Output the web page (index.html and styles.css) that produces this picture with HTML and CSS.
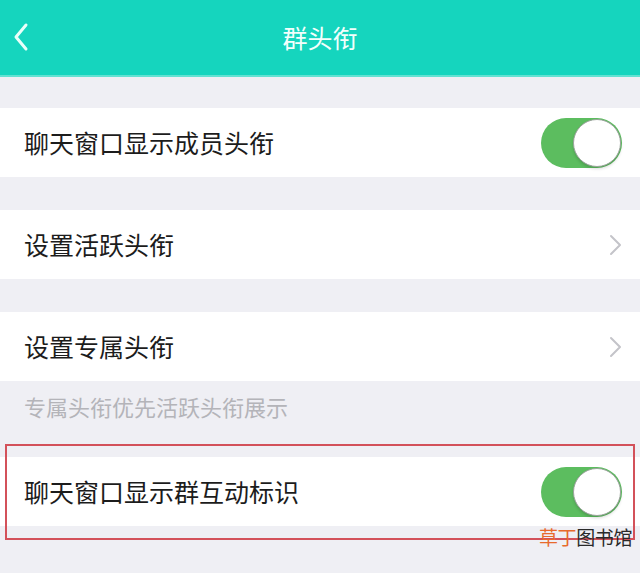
FILE: index.html
```html
<!DOCTYPE html>
<html lang="zh-CN">
<head>
  <meta charset="UTF-8" />
  <title>群头衔</title>
  <link rel="stylesheet" href="styles.css">
</head>
<body>
  <header class="nav-bar">
    <span class="back-btn">
      <svg width="16" height="30" viewBox="0 0 16 30">
        <path d="M13 3 L3 15 L13 27" fill="none" stroke="#eafffa" stroke-width="3" stroke-linecap="round" stroke-linejoin="round"/>
      </svg>
    </span>
    <h1 class="nav-title">群头衔</h1>
  </header>

  <main class="settings">
    <div class="cell first">
      <span class="cell-label">聊天窗口显示成员头衔</span>
      <span class="switch on"><span class="knob"></span></span>
    </div>

    <div class="cell gap">
      <span class="cell-label">设置活跃头衔</span>
      <svg class="arrow" width="13" height="22" viewBox="0 0 13 22">
        <path d="M2 2 L11 11 L2 20" fill="none" stroke="#c4c4c9" stroke-width="2" stroke-linecap="round" stroke-linejoin="round"/>
      </svg>
    </div>

    <div class="cell gap">
      <span class="cell-label">设置专属头衔</span>
      <svg class="arrow" width="13" height="22" viewBox="0 0 13 22">
        <path d="M2 2 L11 11 L2 20" fill="none" stroke="#c4c4c9" stroke-width="2" stroke-linecap="round" stroke-linejoin="round"/>
      </svg>
    </div>
    <p class="note">专属头衔优先活跃头衔展示</p>

    <div class="marked">
      <div class="cell">
        <span class="cell-label">聊天窗口显示群互动标识</span>
        <span class="switch on"><span class="knob"></span></span>
      </div>
      <span class="mark-box"></span>
      <span class="stamp"><em>草丁</em>图书馆</span>
    </div>
  </main>
</body>
</html>
```

FILE: styles.css
```css
* {
  box-sizing: border-box;
}
body {
  margin: 0;
  min-height: 573px;
  background-color: #efeff4;
  font-family: "Noto Sans CJK SC", "Noto Sans", sans-serif;
  color: #1c1c1c;
}
.nav-bar {
  height: 77px;
  background-color: #15d5be;
  border-bottom: 2px solid #62e2d2;
  display: flex;
  align-items: center;
  justify-content: center;
  position: relative;
}
.back-btn {
  position: absolute;
  left: 13px;
  top: 22px;
  display: flex;
}
.nav-title {
  margin: 0;
  font-size: 25px;
  font-weight: normal;
  color: #f2fffc;
  line-height: 1;
}
.settings {
  padding: 31px 0 46px;
}
.cell {
  height: 69px;
  background: white;
  display: flex;
  align-items: center;
  justify-content: space-between;
  padding: 0 18px 0 24px;
}
.cell.gap {
  margin-top: 33px;
}
.cell-label {
  font-size: 25px;
  line-height: 1;
}
.switch {
  width: 81px;
  height: 50px;
  border-radius: 25px;
  background-color: #e5e5ea;
  display: flex;
  align-items: center;
  padding: 1px;
}
.switch.on {
  background-color: #5cbd5f;
  justify-content: flex-end;
}
.knob {
  width: 48px;
  height: 48px;
  border-radius: 50%;
  background: white;
  border: 1px solid #9aa39b;
  box-shadow: 0 2px 3px rgba(0, 0, 0, 0.15);
}
.note {
  margin: 0;
  height: 76px;
  padding: 14px 0 0 24px;
  font-size: 22px;
  line-height: 1;
  color: #b4b4b9;
}
.marked {
  position: relative;
}
.mark-box {
  position: absolute;
  left: 5px;
  top: -13px;
  width: 630px;
  height: 96px;
  border: 2px solid #d3515a;
}
.stamp {
  position: absolute;
  right: 8px;
  top: 70px;
  font-size: 19px;
  line-height: 20px;
  color: #2a2a2a;
  letter-spacing: -0.4px;
}
.stamp em {
  font-style: normal;
  color: #e86a2c;
}
```
